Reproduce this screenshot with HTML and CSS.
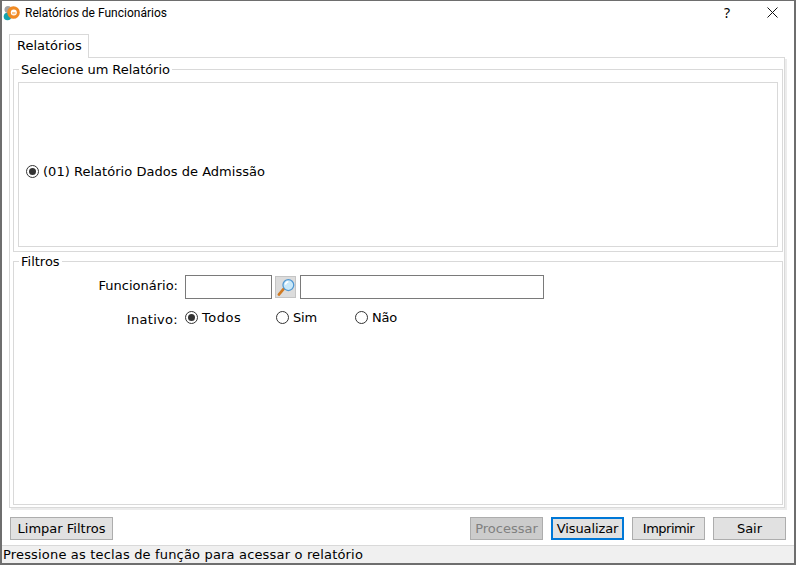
FILE: index.html
```html
<!DOCTYPE html>
<html lang="pt">
<head>
<meta charset="utf-8">
<title>Relatórios de Funcionários</title>
<link rel="stylesheet" href="styles.css">
</head>
<body>
<div class="window">
  <header class="titlebar">
    <svg class="app-icon" width="18" height="16" viewBox="0 0 18 16">
      <circle cx="6" cy="4.500" r="3.500" fill="#a3a3a3"/>
      <circle cx="5.500" cy="11.500" r="3.800" fill="#14a3ad"/>
      <circle cx="11.500" cy="7.500" r="6.300" fill="#f08a24"/>
      <circle cx="11.800" cy="7.500" r="3" fill="#fff"/>
      <path d="M10 7h3.500v2.200h-3.500z" fill="#f8c48c"/>
    </svg>
    <span class="title">Relatórios de Funcionários</span>
    <span class="help">?</span>
    <svg class="close" width="11" height="11" viewBox="0 0 11 11"><path d="M.5.5l10 10M10.500.5l-10 10" stroke="#111" stroke-width="1" fill="none"/></svg>
  </header>
  <div class="content">
    <div class="tabs"><div class="tab">Relatórios</div></div>
    <div class="panel">
      <fieldset class="group group-select">
        <legend>Selecione um Relatório</legend>
        <div class="listbox">
          <label class="radio main"><span class="dot on"></span>(01) Relatório Dados de Admissão</label>
        </div>
      </fieldset>
      <fieldset class="group group-filter">
        <legend>Filtros</legend>
        <div class="row row-func">
          <span class="lbl lbl-func">Funcionário:</span>
          <span class="input short"></span>
          <span class="search">
            <svg width="20" height="20" viewBox="0 0 20 20">
              <path d="M3 18l5.500-6.500" stroke="#d07a22" stroke-width="2.800" stroke-linecap="round"/>
              <circle cx="13" cy="8" r="5.700" fill="#c9e8f9" stroke="#4f97d2" stroke-width="1.300"/>
              <path d="M10 7.500a3.500 3.500 0 0 1 3-3" stroke="#fff" stroke-width="1.500" fill="none"/>
            </svg>
          </span>
          <span class="input long"></span>
        </div>
        <div class="row row-inativo">
          <span class="lbl lbl-ina">Inativo:</span>
          <label class="radio opt todos"><span class="dot on"></span>Todos</label>
          <label class="radio opt sim"><span class="dot"></span>Sim</label>
          <label class="radio opt nao"><span class="dot"></span>Não</label>
        </div>
      </fieldset>
    </div>
    <div class="actions">
      <button class="btn limpar">Limpar Filtros</button>
      <span class="spacer"></span>
      <button class="btn disabled">Processar</button>
      <button class="btn focus">Visualizar</button>
      <button class="btn imprimir">Imprimir</button>
      <button class="btn">Sair</button>
    </div>
  </div>
  <footer class="status">Pressione as teclas de função para acessar o relatório</footer>
</div>
</body>
</html>
```
FILE: styles.css
```css
* { box-sizing: border-box; }
html, body { margin: 0; padding: 0; background: #fff; }
body { width: 796px; height: 565px; overflow: hidden; font-family: "DejaVu Sans", sans-serif; font-size: 13px; color: #000; }
.window { width: 796px; height: 565px; display: flex; flex-direction: column; border: 1px solid #6e6e6e; border-left-width: 2px; border-right-width: 2px; border-bottom-width: 2px; background: #fff; }
.titlebar { height: 26px; flex: none; display: flex; align-items: center; padding: 0 0 3px 0; }
.app-icon { margin-right: 5px; flex: none; }
.title { font-family: Roboto, sans-serif; font-size: 12px; flex: 1; }
.help { font-family: "Noto Sans", sans-serif; font-size: 14px; margin-right: 37px; }
.close { margin-right: 16px; }
.content { flex: 1; display: flex; flex-direction: column; padding: 7px 8px 0 7px; min-height: 0; }
.tabs { display: flex; height: 23px; flex: none; position: relative; z-index: 1; }
.tab { width: 80px; height: 24px; border: 1px solid #d9d9d9; border-bottom: 0; background: #fff; padding: 3px 0 0 7px; }
.panel { width: 776px; height: 451px; flex: none; border: 1px solid #d9d9d9; padding: 4px 1px 2px 3px; display: flex; flex-direction: column; box-shadow: 2px 2px 0 #ececec; }
.group { margin: 0; padding: 0; border: 1px solid #d9d9d9; min-width: 0; }
.group legend { margin-left: 5px; padding: 0 2px; font-size: 13px; line-height: 15px; height: 15px; }
.group-select { height: 190px; padding: 5px 4px 3px 4px; }
.group-select legend { margin-left: 1px; letter-spacing: -.05px; }
.group-filter { flex: 1; margin-top: 2px; }
.listbox { height: 165px; border: 1px solid #d9d9d9; display: flex; align-items: center; padding: 14px 0 0 7px; }
.radio { display: inline-flex; align-items: center; font-size: 13px; gap: 4px; white-space: nowrap; }
.radio.main { letter-spacing: .03px; }
.dot { width: 13px; height: 13px; border-radius: 50%; border: 1px solid #333; background: #fff; display: inline-flex; align-items: center; justify-content: center; flex: none; }
.dot.on::after { content: ""; width: 7px; height: 7px; border-radius: 50%; background: #333; }
.row { display: flex; align-items: center; }
.row-func { height: 24px; margin-top: 6px; }
.row-inativo { height: 16px; margin-top: 10px; }
.lbl { width: 164px; text-align: right; font-size: 13px; flex: none; margin-right: 7px; }
.lbl-func { padding-bottom: 3px; }
.lbl-ina { padding-top: 4px; letter-spacing: .3px; }
.input { height: 24px; border: 1px solid #7a7a7a; background: #fff; display: block; }
.short { width: 87px; }
.long { width: 244px; margin-left: 4px; }
.search { width: 21px; height: 22px; margin-left: 3px; background: #dcdcdc; border: 1px solid #c4c4c4; display: flex; align-items: center; justify-content: center; }
.opt.todos { width: 91px; letter-spacing: .5px; }
.opt.sim { width: 79px; letter-spacing: -.2px; }
.opt.nao { letter-spacing: -.2px; }
.actions { height: 23px; flex: none; display: flex; gap: 8px; margin-top: 9px; }
.spacer { flex: 1; }
.btn { width: 73px; height: 23px; padding: 0; border: 1px solid #adadad; background: #e1e1e1; color: #000; font-family: "DejaVu Sans", sans-serif; font-size: 13px; }
.limpar { width: 103px; margin-left: 1px; }
.imprimir { letter-spacing: -.5px; }
.disabled { background: #cccccc; color: #808080; }
.focus { border: 2px solid #0078d7; letter-spacing: -.1px; }
.status { height: 18px; flex: none; margin-top: 5px; background: #f0f0f0; border-top: 1px solid #d9d9d9; font-size: 13px; line-height: 18px; padding-left: 1px; letter-spacing: .17px; }
```
